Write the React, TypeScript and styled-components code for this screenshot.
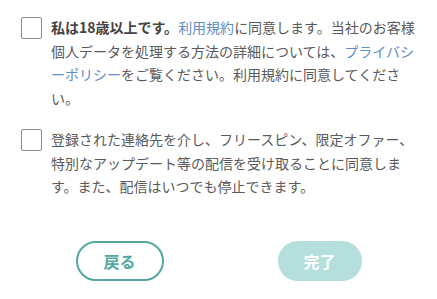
import React from "react";
import styled, { createGlobalStyle } from "styled-components";

const Global = createGlobalStyle`
  html, body { margin: 0; padding: 0; background: #fff; }
  body { font-family: "Noto Sans CJK JP", "Noto Sans", sans-serif; }
`;

const Page = styled.div`
  width: 437px;
  height: 299px;
  box-sizing: border-box;
  padding: 16px 15px 0 21px;
  display: flex;
  flex-direction: column;
`;

const Row = styled.label<{ $mt?: number }>`
  display: flex;
  align-items: flex-start;
  gap: 9px;
  margin-top: ${(p) => p.$mt ?? 0}px;
`;

const Box = styled.span`
  flex: none;
  width: 21px;
  height: 22px;
  margin-top: 1px;
  border: 1px solid #8a8a8a;
  border-radius: 2px;
  box-sizing: border-box;
  background: #fff;
`;

const Text = styled.p`
  margin: 0;
  width: 370px;
  font-size: 14px;
  line-height: 23.5px;
  color: #5a5a5a;
  letter-spacing: 0;
`;

const Strong = styled.b`
  color: #444;
  font-weight: 700;
`;

const Link = styled.a`
  color: #5b8ec6;
  text-decoration: none;
`;

const Buttons = styled.div`
  display: flex;
  justify-content: center;
  gap: 114px;
  margin-top: auto;
  margin-bottom: 18px;
  padding-right: 6px;
`;

const Button = styled.button<{ $primary?: boolean }>`
  width: ${(p) => (p.$primary ? 84 : 88)}px;
  height: 40px;
  border-radius: 20px;
  box-sizing: border-box;
  font-family: "Noto Sans CJK JP", sans-serif;
  font-weight: 700;
  font-size: 16px;
  cursor: pointer;
  border: ${(p) => (p.$primary ? "none" : "2px solid #52a8a1")};
  background: ${(p) => (p.$primary ? "#b4dfdd" : "#fff")};
  color: ${(p) => (p.$primary ? "#fff" : "#52a8a1")};
`;

export default function App() {
  return (
    <>
      <Global />
      <Page>
        <Row>
          <Box />
          <Text>
            <Strong>私は18歳以上です。</Strong>
            <Link>利用規約</Link>に同意します。当社のお客様個人データを処理する方法の詳細については、
            <Link>プライバシーポリシー</Link>をご覧ください。利用規約に同意してください。
          </Text>
        </Row>
        <Row $mt={18}>
          <Box />
          <Text>
            登録された連絡先を介し、フリースピン、限定オファー、特別なアップデート等の配信を受け取ることに同意します。また、配信はいつでも停止できます。
          </Text>
        </Row>
        <Buttons>
          <Button>戻る</Button>
          <Button $primary>完了</Button>
        </Buttons>
      </Page>
    </>
  );
}
